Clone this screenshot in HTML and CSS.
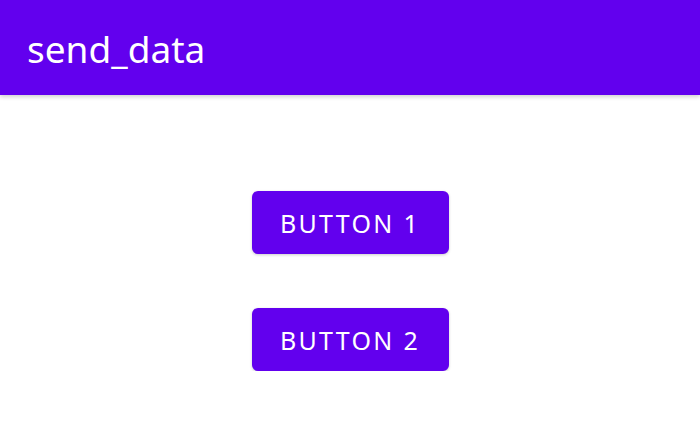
FILE: index.html
```html
<!DOCTYPE html>
<html lang="en">
  <head>
    <meta charset="UTF-8" />
    <meta name="viewport" content="width=device-width, initial-scale=1.0" />
    <title>send_data</title>
    <link rel="stylesheet" href="styles.css">
  </head>
  <body>
    <!-- App bar -->
    <header class="app-bar">
      <h1 class="app-title">send_data</h1>
    </header>

    <!-- Buttons -->
    <main class="content">
      <button type="button" class="btn">Button 1</button>
      <button type="button" class="btn">Button 2</button>
    </main>
  </body>
</html>
```

FILE: styles.css
```css
body {
  margin: 0;
  background: #ffffff;
  font-family: "Noto Sans", "Open Sans", sans-serif;
}
.app-bar {
  height: 95px;
  background: #6200ee;
  display: flex;
  align-items: center;
  padding: 2px 27px 0;
  box-sizing: border-box;
  box-shadow: 0 2px 4px rgba(0, 0, 0, 0.18);
}
.app-title {
  margin: 0;
  color: #ffffff;
  font-size: 37px;
  font-weight: 400;
}
.content {
  display: flex;
  flex-direction: column;
  align-items: center;
  gap: 54px;
  padding-top: 96px;
}
.btn {
  width: 197px;
  height: 63px;
  background: #6200ee;
  color: #ffffff;
  border: none;
  border-radius: 6px;
  font-family: "Noto Sans", "Open Sans", sans-serif;
  font-size: 25px;
  letter-spacing: 2.3px;
  text-transform: uppercase;
  box-shadow: 0 1px 3px rgba(0, 0, 0, 0.2);
  cursor: pointer;
}
```
